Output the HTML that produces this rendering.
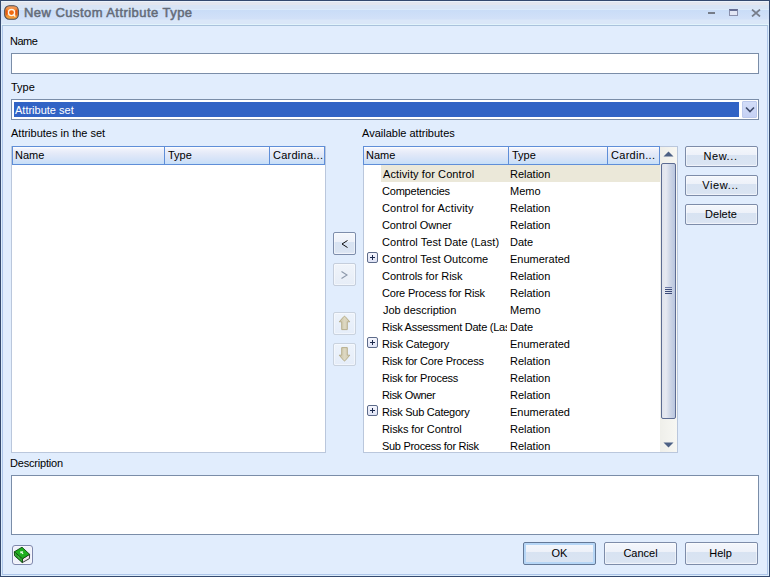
<!DOCTYPE html>
<html><head><meta charset="utf-8">
<style>
*{box-sizing:border-box;margin:0;padding:0}
html,body{width:770px;height:577px;overflow:hidden;background:#e1edfd}
body{position:relative;font-family:"Liberation Sans",sans-serif;font-size:11px;color:#000}
.a{position:absolute}
.win{left:0;top:0;width:770px;height:577px;border:1px solid #34496e;background:#dcedfc}
.body{left:2px;top:25px;width:766px;height:550px;border:1px solid #aec6ea;background:#e1edfd}
.title{left:1px;top:1px;width:768px;height:24px;background:linear-gradient(#eaf2fb 0,#eaf2fb 1px,#e3e6ee 1px,#e3e6ee 4px,#d9e5f5 4px,#d9e5f5 8px,#dcebfa 8px,#dcebfa 9px,#c9dcf7 9px,#d2e1f8 18px,#dae7f8 19px,#dae7f8 23px,#e2f4fc 23px)}
.ttl{left:24px;top:4px;font-weight:normal;font-size:13px;letter-spacing:0.45px;color:#646b78;line-height:17px;-webkit-text-stroke:0.5px #646b78}
.lbl{line-height:13px;white-space:nowrap}
.box{background:#fff;border:1px solid #7a8da8}
.hdr{background:linear-gradient(#ffffff 0,#f0f2fb 12%,#e3e9f8 40%,#d3e2f8 78%,#c6dff8 100%);border:1px solid #5f8ed8;height:19px}
.hc{top:0;height:17px;line-height:17px;padding-left:3px;white-space:nowrap}
.sep{top:0;width:1px;height:17px;background:#5f8ed8}
.btn{border:1px solid #7d8ca9;border-radius:2px;background:linear-gradient(#f4f7fc 0,#edf1f9 43%,#d8e3f2 43%,#dae4f2 90%,#e6ecf8 100%);text-align:center;line-height:19px;box-shadow:inset 0 0 0 1px rgba(255,255,255,0.45)}
.def{border-color:#637897;box-shadow:inset 0 0 0 2px #b6d6f6}
.plus{width:11px;height:11px;border:1px solid #5d6b8a;border-radius:2px;background:linear-gradient(#f4f5fc,#dfe3f5)}
.plus:before{content:"";position:absolute;left:2px;top:4px;width:5px;height:1px;background:#1c2a4e}
.plus:after{content:"";position:absolute;left:4px;top:2px;width:1px;height:5px;background:#1c2a4e}
.row{left:0;height:17px;line-height:17px;white-space:nowrap}
.row span{top:1px}
</style></head><body>
<div class="a win"></div>
<div class="a title"></div>
<div class="a body"></div>
<div class="a" style="left:2px;top:25px;width:766px;height:1px;background:#a9c2dc"></div>
<!-- app icon -->
<svg class="a" style="left:3px;top:4px" width="17" height="17" viewBox="0 0 17 17">
<defs><linearGradient id="ig" x1="0" y1="0" x2="0" y2="1"><stop offset="0" stop-color="#f2a168"/><stop offset="0.45" stop-color="#f07a1e"/><stop offset="1" stop-color="#f6a640"/></linearGradient></defs>
<rect x="1.7" y="1.7" width="13.6" height="13.6" rx="4.6" fill="url(#ig)" stroke="#4a474e" stroke-width="1.1"/>
<path d="M3 5 L5.5 8.5 L3 12 Z M14 5 L11.5 8.5 L14 12 Z" fill="#e5500f" opacity="0.85"/>
<circle cx="8.5" cy="8.6" r="3.1" fill="#f06a10" stroke="#fff6e8" stroke-width="1.3"/>
<line x1="10.7" y1="10.8" x2="12.3" y2="12.6" stroke="#fff6e8" stroke-width="1.3"/>
</svg>
<div class="a ttl">New Custom Attribute Type</div>
<!-- window buttons -->
<div class="a" style="left:708px;top:12px;width:7px;height:2px;background:#767c88"></div>
<div class="a" style="left:729px;top:9px;width:9px;height:7px;border:1px solid #8a90ac;border-top:2px solid #656d92;background:#e2e6f4"></div>
<svg class="a" style="left:751px;top:9px" width="10" height="8" viewBox="0 0 10 8"><path d="M1 0.5 L9 7.5 M9 0.5 L1 7.5" stroke="#777d8a" stroke-width="1.7"/></svg>

<div class="a lbl" style="left:10px;top:35px;letter-spacing:-0.5px">Name</div>
<div class="a box" style="left:11px;top:53px;width:748px;height:21px"></div>

<div class="a lbl" style="left:11px;top:81px">Type</div>
<div class="a box" style="left:11px;top:99px;width:748px;height:21px"></div>
<div class="a" style="left:14px;top:102px;width:725px;height:15px;background:#3163c5;color:#fff;line-height:16px;padding-left:1px">Attribute set</div>
<div class="a" style="left:742px;top:101px;width:15px;height:17px;background:linear-gradient(#d3ddf8,#c5d1f4);border:1px solid #bcc9ec;border-radius:1px"></div>
<svg class="a" style="left:745px;top:106px" width="10" height="8" viewBox="0 0 10 8"><path d="M1 1.5 L5 5.5 L9 1.5" fill="none" stroke="#3e4a6a" stroke-width="1.6"/></svg>

<div class="a lbl" style="left:11px;top:127px">Attributes in the set</div>
<div class="a box" style="left:11px;top:146px;width:315px;height:307px;border-color:#bac7dc"></div>
<div class="a hdr" style="left:12px;top:146px;width:313px"></div>
<div class="a hc" style="left:12px;top:147px">Name</div>
<div class="a sep" style="left:164px;top:147px"></div>
<div class="a hc" style="left:165px;top:147px">Type</div>
<div class="a sep" style="left:269px;top:147px"></div>
<div class="a hc" style="left:270px;top:147px;letter-spacing:0.25px">Cardina...</div>

<!-- middle buttons -->
<div class="a btn" style="left:333px;top:232px;width:23px;height:23px;border-color:#7d8dab"></div>
<svg class="a" style="left:341px;top:240px" width="7" height="8" viewBox="0 0 7 8"><path d="M6.5 0.5 L1 4 L6.5 7.5" fill="none" stroke="#000" stroke-width="0.95"/></svg>
<div class="a btn" style="left:333px;top:263px;width:23px;height:23px;border-color:#c5cedc;background:linear-gradient(#f0f4fa,#e6edf7)"></div>
<svg class="a" style="left:341px;top:271px" width="7" height="8" viewBox="0 0 7 8"><path d="M0.5 0.5 L6 4 L0.5 7.5" fill="none" stroke="#8c98aa" stroke-width="1.1"/></svg>
<div class="a btn" style="left:333px;top:312px;width:23px;height:23px;border-color:#c9d2de;border-radius:2px;background:linear-gradient(#edf3fb,#e5edf9)"></div>
<svg class="a" style="left:338px;top:315px" width="13" height="16" viewBox="0 0 13 16"><defs><linearGradient id="ag" x1="0" x2="1" y1="0" y2="0"><stop offset="0" stop-color="#c9c1a2"/><stop offset="0.5" stop-color="#ddd8c2"/><stop offset="1" stop-color="#d2cbb0"/></linearGradient></defs><path d="M5.8 1.6 Q6.5 0.9 7.2 1.6 L11.8 6.8 L9.3 6.8 L9.3 14.6 L3.7 14.6 L3.7 6.8 L1.2 6.8 Z" fill="url(#ag)" stroke="#b2a985" stroke-width="0.9" stroke-linejoin="round"/></svg>
<div class="a btn" style="left:333px;top:343px;width:23px;height:23px;border-color:#c9d2de;border-radius:2px;background:linear-gradient(#edf3fb,#e5edf9)"></div>
<svg class="a" style="left:338px;top:347px" width="13" height="16" viewBox="0 0 13 16"><path d="M3.7 0.6 L9.3 0.6 L9.3 8.2 L11.8 8.2 L7.2 13.6 Q6.5 14.3 5.8 13.6 L1.2 8.2 L3.7 8.2 Z" fill="url(#ag)" stroke="#b2a985" stroke-width="0.9" stroke-linejoin="round"/></svg>

<div class="a lbl" style="left:362px;top:127px">Available attributes</div>
<div class="a box" style="left:363px;top:146px;width:315px;height:307px;border-color:#bac7dc"></div>
<div class="a hdr" style="left:363px;top:146px;width:297px"></div>
<div class="a hc" style="left:363px;top:147px">Name</div>
<div class="a sep" style="left:508px;top:147px"></div>
<div class="a hc" style="left:509px;top:147px">Type</div>
<div class="a sep" style="left:607px;top:147px"></div>
<div class="a hc" style="left:608px;top:147px;letter-spacing:0.3px">Cardin...</div>

<div class="a" id="rows" style="left:364px;top:165px;width:296px;height:287px;overflow:hidden">
<div class="a" style="left:17px;top:0;width:279px;height:17px;background:#ebe8d9"></div>
<div class="a row" style="top:0"><span class="a" style="left:19px;letter-spacing:0.1px">Activity for Control</span><span class="a" style="left:146px">Relation</span></div>
<div class="a row" style="top:17px"><span class="a" style="left:18px;letter-spacing:-0.2px">Competencies</span><span class="a" style="left:146px">Memo</span></div>
<div class="a row" style="top:34px"><span class="a" style="left:18px;letter-spacing:0.15px">Control for Activity</span><span class="a" style="left:146px">Relation</span></div>
<div class="a row" style="top:51px"><span class="a" style="left:18px;letter-spacing:-0.1px">Control Owner</span><span class="a" style="left:146px">Relation</span></div>
<div class="a row" style="top:68px"><span class="a" style="left:18px;letter-spacing:0.05px">Control Test Date (Last)</span><span class="a" style="left:146px">Date</span></div>
<div class="a row" style="top:85px"><span class="a" style="left:18px">Control Test Outcome</span><span class="a" style="left:146px">Enumerated</span></div>
<div class="a row" style="top:102px"><span class="a" style="left:18px;letter-spacing:-0.05px">Controls for Risk</span><span class="a" style="left:146px">Relation</span></div>
<div class="a row" style="top:119px"><span class="a" style="left:18px;letter-spacing:-0.2px">Core Process for Risk</span><span class="a" style="left:146px">Relation</span></div>
<div class="a row" style="top:136px"><span class="a" style="left:19px;letter-spacing:-0.05px">Job description</span><span class="a" style="left:146px">Memo</span></div>
<div class="a row" style="top:153px"><span class="a" style="left:18px;width:125px;overflow:hidden;letter-spacing:-0.25px">Risk Assessment Date (Last)</span><span class="a" style="left:146px">Date</span></div>
<div class="a row" style="top:170px"><span class="a" style="left:18px;letter-spacing:-0.15px">Risk Category</span><span class="a" style="left:146px">Enumerated</span></div>
<div class="a row" style="top:187px"><span class="a" style="left:18px;letter-spacing:-0.25px">Risk for Core Process</span><span class="a" style="left:146px">Relation</span></div>
<div class="a row" style="top:204px"><span class="a" style="left:18px;letter-spacing:-0.25px">Risk for Process</span><span class="a" style="left:146px">Relation</span></div>
<div class="a row" style="top:221px"><span class="a" style="left:18px;letter-spacing:-0.35px">Risk Owner</span><span class="a" style="left:146px">Relation</span></div>
<div class="a row" style="top:238px"><span class="a" style="left:18px;letter-spacing:-0.25px">Risk Sub Category</span><span class="a" style="left:146px">Enumerated</span></div>
<div class="a row" style="top:255px"><span class="a" style="left:18px;letter-spacing:-0.1px">Risks for Control</span><span class="a" style="left:146px">Relation</span></div>
<div class="a row" style="top:272px"><span class="a" style="left:18px;letter-spacing:-0.3px">Sub Process for Risk</span><span class="a" style="left:146px">Relation</span></div>
<div class="a plus" style="left:3px;top:87px"></div>
<div class="a plus" style="left:3px;top:172px"></div>
<div class="a plus" style="left:3px;top:240px"></div>
</div>

<!-- scrollbar -->
<div class="a" style="left:660px;top:147px;width:17px;height:305px;background:linear-gradient(90deg,#efefea,#f7f7f3)"></div>
<svg class="a" style="left:663px;top:151px" width="11" height="6" viewBox="0 0 11 6"><path d="M0.5 5.5 L5.5 0.5 L10.5 5.5 Z" fill="#4d6185"/></svg>
<div class="a" style="left:661px;top:163px;width:15px;height:256px;border:1px solid #5d6c92;border-radius:2px;background:linear-gradient(90deg,#dfe3ec 0,#e6e9f1 30%,#cfd7e7 60%,#b9c6df 100%)"></div>
<div class="a" style="left:665px;top:287px;width:7px;height:1px;background:#6d7aa6"></div>
<div class="a" style="left:665px;top:289px;width:7px;height:1px;background:#3c4a78"></div>
<div class="a" style="left:665px;top:291px;width:7px;height:1px;background:#3c4a78"></div>
<div class="a" style="left:665px;top:293px;width:7px;height:1px;background:#3c4a78"></div>
<svg class="a" style="left:663px;top:442px" width="11" height="6" viewBox="0 0 11 6"><path d="M0.5 0.5 L5.5 5.5 L10.5 0.5 Z" fill="#4d6185"/></svg>

<!-- right buttons -->
<div class="a btn" style="left:685px;top:146px;width:73px;height:21px;letter-spacing:0.6px;text-indent:-2px">New...</div>
<div class="a btn" style="left:685px;top:175px;width:73px;height:21px;letter-spacing:0.6px;text-indent:-2px">View...</div>
<div class="a btn" style="left:685px;top:204px;width:73px;height:21px;text-indent:-1px">Delete</div>

<div class="a lbl" style="left:10px;top:457px;letter-spacing:-0.2px">Description</div>
<div class="a box" style="left:11px;top:475px;width:748px;height:60px"></div>

<div class="a btn" style="left:12px;top:545px;width:21px;height:20px;border-color:#7f88ac;border-radius:3px;background:#eff1fa"></div>
<svg class="a" style="left:12px;top:545px" width="21" height="20" viewBox="0 0 21 20">
<path d="M10.5 13.8 L17.6 9.3 L17.4 13.6 L10.3 17.6 Z" fill="#efe3ea" stroke="#262a26" stroke-width="0.9" stroke-linejoin="round"/>
<path d="M2.3 6.8 L10.5 13.8 L10.3 17.6 L2.6 10.8 Z" fill="#139413" stroke="#0c4a0c" stroke-width="0.9" stroke-linejoin="round"/>
<path d="M10 2.2 L17.6 9.3 L10.5 13.8 L2.3 6.8 Z" fill="#1eae1e" stroke="#0c4a0c" stroke-width="0.9" stroke-linejoin="round"/>
<path d="M3.3 8.6 L9.6 14 M3.4 10 L9.6 15.4" stroke="#a8e8a8" stroke-width="0.6" stroke-dasharray="1 0.8"/>
<path d="M8 6.4 L11.2 6.2 L10.6 7.4 L11.6 8.6 L10.4 9.2 L9.6 8 L8.6 8.6 Z" fill="#e6ffe6"/>
</svg>

<div class="a btn def" style="left:523px;top:542px;width:73px;height:23px;line-height:21px">OK</div>
<div class="a btn" style="left:604px;top:542px;width:73px;height:23px;line-height:21px">Cancel</div>
<div class="a btn" style="left:685px;top:542px;width:73px;height:23px;line-height:21px;text-indent:-2px">Help</div>
</body></html>
